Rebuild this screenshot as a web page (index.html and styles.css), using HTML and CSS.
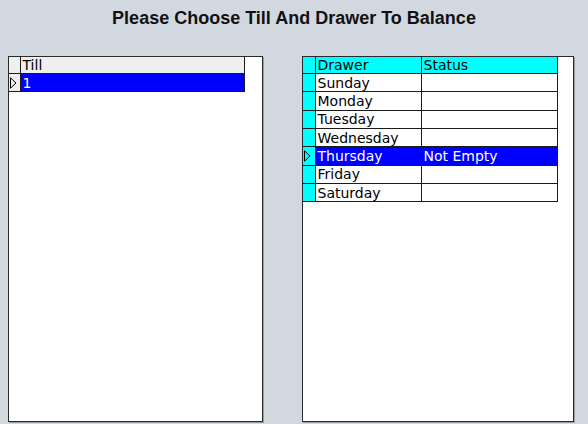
FILE: index.html
```html
<!DOCTYPE html>
<html>
<head>
<meta charset="utf-8">
<link rel="stylesheet" href="styles.css">
</head>
<body>
<div class="page">
  <h1 class="title">Please Choose Till And Drawer To Balance</h1>
  <div class="panels">
    <div class="panel panel-left">
      <table class="grid grid-till">
        <colgroup><col class="c-ind"><col class="c-till"></colgroup>
        <tr class="hdr"><td class="ind"></td><td>Till</td></tr>
        <tr class="sel"><td class="ind"><svg class="arrow" width="7" height="12" viewBox="0 0 7 12"><path d="M0.5 0.8 L6 6 L0.5 11.2 Z" fill="none" stroke="#000" stroke-width="1"/></svg></td><td>1</td></tr>
      </table>
    </div>
    <div class="panel panel-right">
      <table class="grid grid-drawer">
        <colgroup><col class="c-ind2"><col class="c-drawer"><col class="c-status"></colgroup>
        <tr class="hdr"><td class="ind"></td><td>Drawer</td><td>Status</td></tr>
        <tr><td class="ind"></td><td>Sunday</td><td></td></tr>
        <tr><td class="ind"></td><td>Monday</td><td></td></tr>
        <tr><td class="ind"></td><td>Tuesday</td><td></td></tr>
        <tr><td class="ind"></td><td>Wednesday</td><td></td></tr>
        <tr class="sel"><td class="ind"><svg class="arrow" width="7" height="12" viewBox="0 0 7 12"><path d="M0.5 0.8 L6 6 L0.5 11.2 Z" fill="none" stroke="#000" stroke-width="1"/></svg></td><td>Thursday</td><td>Not Empty</td></tr>
        <tr><td class="ind"></td><td>Friday</td><td></td></tr>
        <tr><td class="ind"></td><td>Saturday</td><td></td></tr>
      </table>
    </div>
  </div>
</div>
</body>
</html>
```
FILE: styles.css
```css
html, body {
  margin: 0;
  padding: 0;
  background: #d2d8e0;
  width: 588px;
  height: 424px;
  overflow: hidden;
}
.page {
  display: flex;
  flex-direction: column;
}
.title {
  margin: 0;
  height: 56px;
  padding-top: 7px;
  box-sizing: border-box;
  text-align: center;
  font-family: "Liberation Sans", Arial, sans-serif;
  font-weight: bold;
  font-size: 18px;
  line-height: 22px;
  color: #111;
}
.panels {
  display: flex;
  padding-left: 8px;
  gap: 39px;
}
.panel {
  background: #fff;
  height: 366px;
  box-sizing: border-box;
  border: 1px solid #2a2a2a;
  box-shadow: 1px 1px 0 #9a9ea4;
}
.panel-left { width: 255px; }
.panel-right { width: 272px; }
.grid {
  border-collapse: collapse;
  table-layout: fixed;
  font-family: "DejaVu Sans", Verdana, sans-serif;
  font-size: 14px;
  color: #000;
}
.grid td {
  border: 1px solid #1a1a1a;
  padding: 0 0 0 2px;
  height: 17.33px;
  line-height: 16px;
  white-space: nowrap;
  overflow: hidden;
  vertical-align: middle;
}
.grid tr.hdr td { height: 15.33px; }
.grid tr:first-child td { border-top: none; }
.grid td:first-child { border-left: none; }
.grid td.ind { padding: 0; }
.grid-till { width: 236px; }
.c-ind { width: 11px; }
.grid-till .hdr td, .grid-till td.ind { background: #efefef; }
.grid-drawer { width: 255px; }
.c-ind2 { width: 12px; }
.c-drawer { width: 106px; }
.grid-drawer .hdr td, .grid-drawer td.ind { background: #00ffff; }
.grid .sel td { background: #0000ff; color: #fff; }
.grid-till .sel td.ind { background: #efefef; }
.grid-drawer .sel td.ind { background: #00ffff; }
.arrow { display: block; margin-left: 1px; }
```
